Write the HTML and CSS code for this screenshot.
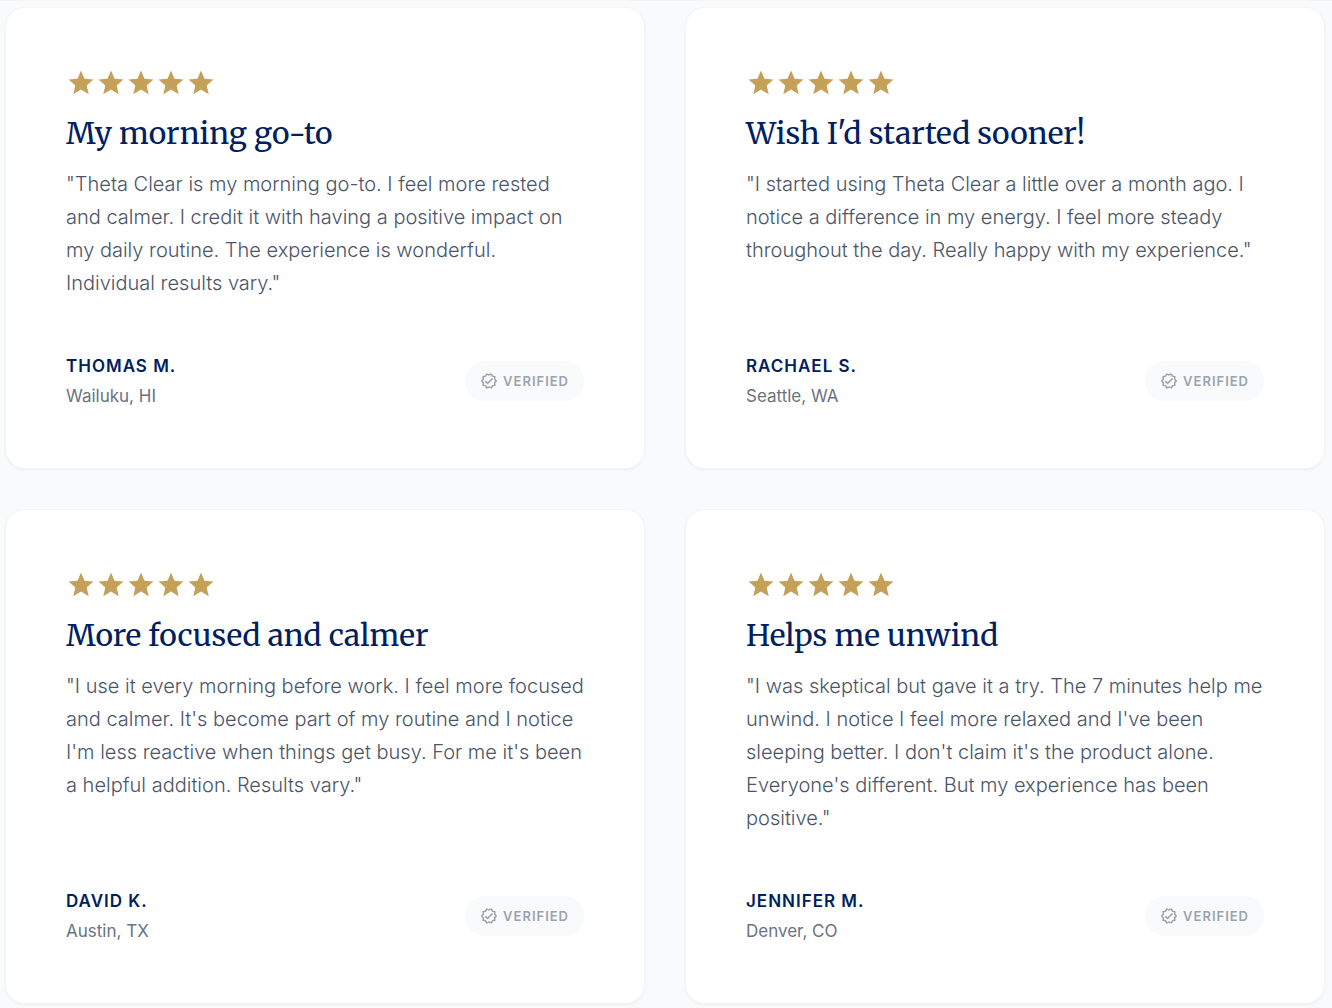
FILE: index.html
```html
<!DOCTYPE html>
<html lang="en">
<head>
    <meta charset="UTF-8">
    <meta name="viewport" content="width=device-width, initial-scale=1.0">
    <title>Customer Reviews</title>
    <link rel="stylesheet" href="styles.css">
</head>
<body>
    <!-- Shared icons -->
    <svg class="sprite" aria-hidden="true">
        <symbol id="star" viewBox="0 0 24 24">
            <path d="M12 17.27L18.18 21l-1.64-7.03L22 9.24l-7.19-.61L12 2 9.19 8.63 2 9.24l5.46 4.73L5.82 21z"/>
        </symbol>
        <symbol id="stars" viewBox="0 0 120 24">
            <use href="#star" x="0" width="24" height="24"/>
            <use href="#star" x="24" width="24" height="24"/>
            <use href="#star" x="48" width="24" height="24"/>
            <use href="#star" x="72" width="24" height="24"/>
            <use href="#star" x="96" width="24" height="24"/>
        </symbol>
        <symbol id="verified" viewBox="0 0 24 24">
            <path d="M23 11.99l-2.44-2.79.34-3.69-3.61-.82L15.4 1.5 12 2.96 8.6 1.5 6.71 4.69 3.1 5.5l.34 3.7L1 11.99l2.44 2.79-.34 3.7 3.61.82 1.89 3.2 3.4-1.47 3.4 1.46 1.89-3.19 3.61-.82-.34-3.69L23 11.99zm-3.95 1.48l-.56.65.08.85.18 1.95-1.9.43-.84.19-.44.74-.99 1.68-1.78-.77-.8-.34-.79.34-1.78.77-.99-1.67-.44-.74-.84-.19-1.9-.43.18-1.96.08-.85-.56-.65-1.29-1.47 1.29-1.48.56-.65-.09-.86-.18-1.94 1.9-.43.84-.19.44-.74.99-1.68 1.78.77.8.34.79-.34 1.78-.77.99 1.68.44.74.84.19 1.9.43-.18 1.95-.08.85.56.65 1.29 1.47-1.28 1.48z"/>
            <path d="M10.09 13.75l-2.32-2.33-1.48 1.49 3.8 3.81 7.34-7.36-1.48-1.49z"/>
        </symbol>
    </svg>

    <main class="reviews">
        <article class="card">
            <svg class="stars" role="img" aria-label="5 out of 5 stars"><use href="#stars"/></svg>
            <h3>My morning go-to</h3>
            <p class="quote">"Theta Clear is my morning go-to. I feel more rested and calmer. I credit it with having a positive impact on my daily routine. The experience is wonderful. Individual results vary."</p>
            <footer class="author">
                <div>
                    <p class="name">THOMAS M.</p>
                    <p class="place">Wailuku, HI</p>
                </div>
                <span class="badge"><svg class="check"><use href="#verified"/></svg>VERIFIED</span>
            </footer>
        </article>

        <article class="card">
            <svg class="stars" role="img" aria-label="5 out of 5 stars"><use href="#stars"/></svg>
            <h3>Wish I'd started sooner!</h3>
            <p class="quote">"I started using Theta Clear a little over a month ago. I notice a difference in my energy. I feel more steady throughout the day. Really happy with my experience."</p>
            <footer class="author">
                <div>
                    <p class="name">RACHAEL S.</p>
                    <p class="place">Seattle, WA</p>
                </div>
                <span class="badge"><svg class="check"><use href="#verified"/></svg>VERIFIED</span>
            </footer>
        </article>

        <article class="card">
            <svg class="stars" role="img" aria-label="5 out of 5 stars"><use href="#stars"/></svg>
            <h3>More focused and calmer</h3>
            <p class="quote">"I use it every morning before work. I feel more focused and calmer. It's become part of my routine and I notice I'm less reactive when things get busy. For me it's been a helpful addition. Results vary."</p>
            <footer class="author">
                <div>
                    <p class="name">DAVID K.</p>
                    <p class="place">Austin, TX</p>
                </div>
                <span class="badge"><svg class="check"><use href="#verified"/></svg>VERIFIED</span>
            </footer>
        </article>

        <article class="card">
            <svg class="stars" role="img" aria-label="5 out of 5 stars"><use href="#stars"/></svg>
            <h3>Helps me unwind</h3>
            <p class="quote">"I was skeptical but gave it a try. The 7 minutes help me unwind. I notice I feel more relaxed and I've been sleeping better. I don't claim it's the product alone. Everyone's different. But my experience has been positive."</p>
            <footer class="author">
                <div>
                    <p class="name">JENNIFER M.</p>
                    <p class="place">Denver, CO</p>
                </div>
                <span class="badge"><svg class="check"><use href="#verified"/></svg>VERIFIED</span>
            </footer>
        </article>
    </main>
</body>
</html>
```

FILE: styles.css
```css
* {
    box-sizing: border-box;
}

body {
    margin: 0;
    font-family: Inter, "Liberation Sans", sans-serif;
    background-color: #f9fafc;
    border-top: 1px solid #f3f4f6;
}

h3,
p {
    margin: 0;
}

.sprite {
    display: none;
}

.reviews {
    display: grid;
    grid-template-columns: 1fr 1fr;
    gap: 40px;
    padding: 6px 7px 4px 5px;
}

.card {
    display: flex;
    flex-direction: column;
    padding: 60px 60px 57px;
    background-color: #fff;
    border: 1px solid #f3f4f6;
    border-radius: 20px;
    box-shadow: 0 1px 3px rgba(0, 0, 0, 0.05);
}

.stars {
    width: 150px;
    height: 30px;
    margin-bottom: 15px;
    fill: #c5a059;
}

h3 {
    margin-bottom: 15px;
    font-family: Merriweather, "DejaVu Serif", serif;
    font-size: 30px;
    font-weight: 400;
    line-height: 40px;
    color: #002060;
}

.quote {
    margin-bottom: 51px;
    font-size: 20px;
    font-weight: 300;
    line-height: 33px;
    color: #4a5568;
}

/* keeps the author row at the bottom of the card */
.author {
    display: flex;
    justify-content: space-between;
    align-items: center;
    margin-top: auto;
}

.name,
.place {
    font-size: 17px;
    line-height: 30px;
}

.name {
    font-weight: 600;
    letter-spacing: 1px;
    color: #002060;
}

.place {
    color: #6b7280;
}

.badge {
    display: flex;
    align-items: center;
    gap: 5px;
    padding: 10px 15px;
    font-size: 13px;
    font-weight: 600;
    line-height: 20px;
    letter-spacing: 1px;
    color: #9ca3af;
    background-color: #f9fafc;
    border-radius: 20px;
}

.check {
    width: 18px;
    height: 18px;
    fill: currentColor;
}
```
